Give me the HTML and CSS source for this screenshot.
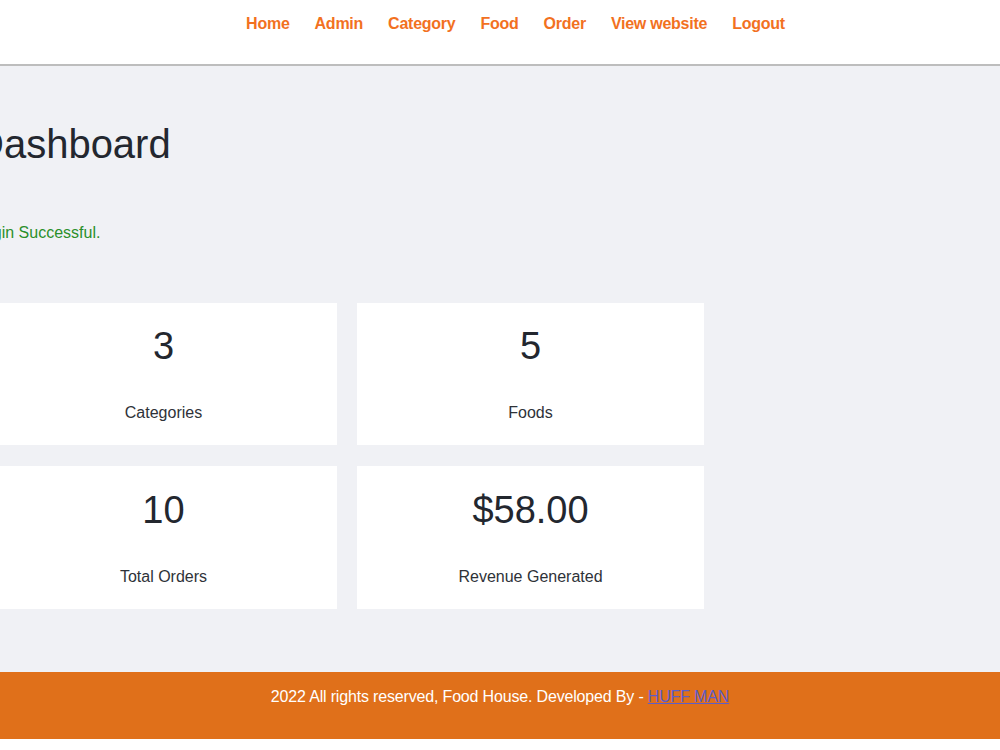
FILE: index.html
```html
<!DOCTYPE html>
<html lang="en">
<head>
<meta charset="utf-8">
<title>Food House - Dashboard</title>
<link rel="stylesheet" href="styles.css">
</head>
<body>
<header class="menu">
  <nav class="nav">
    <a href="#">Home</a>
    <a href="#">Admin</a>
    <a href="#">Category</a>
    <a href="#">Food</a>
    <a href="#">Order</a>
    <a href="#">View website</a>
    <a href="#">Logout</a>
  </nav>
</header>
<main class="main-content">
  <div class="wrapper">
    <h1 class="title">Dashboard</h1>
    <div class="success">Login Successful.</div>
    <div class="cards">
      <div class="card"><div class="num">3</div><div class="label">Categories</div></div>
      <div class="card"><div class="num">5</div><div class="label">Foods</div></div>
      <div class="card"><div class="num">10</div><div class="label">Total Orders</div></div>
      <div class="card"><div class="num">$58.00</div><div class="label">Revenue Generated</div></div>
    </div>
  </div>
</main>
<footer class="footer">
  <p>2022 All rights reserved, Food House. Developed By - <a href="#">HUFF MAN</a></p>
</footer>
</body>
</html>
```

FILE: styles.css
```css
html, body {
  margin: 0;
  padding: 0;
}
body {
  background: #ffffff;
  font-family: "Liberation Sans", Arial, sans-serif;
  font-size: 16px;
  color: #23272f;
  overflow-x: hidden;
}
.menu {
  height: 64px;
  background: #ffffff;
  border-bottom: 2px solid #bdbdbd;
}
.nav {
  display: flex;
  justify-content: center;
  gap: 25px;
  padding: 15px 0 0 31px;
}
.nav a {
  color: #f2711f;
  font-weight: bold;
  font-size: 16px;
  letter-spacing: -0.25px;
  text-decoration: none;
  line-height: 18px;
}
.main-content {
  background: #f0f1f5;
  padding: 55px 0 63px;
}
.wrapper {
  margin-left: -25px;
}
.title {
  margin: 0;
  font-size: 40px;
  font-weight: normal;
  line-height: 46px;
  color: #23272f;
}
.success {
  margin-top: 57px;
  color: #2a8f2a;
  line-height: 18px;
}
.cards {
  margin-top: 61px;
  padding-left: 15px;
  display: grid;
  grid-template-columns: 347px 347px;
  column-gap: 20px;
  row-gap: 21px;
}
.card {
  background: #ffffff;
  height: 142px;
  box-sizing: border-box;
  padding-top: 21px;
  text-align: center;
}
.card:nth-child(n+3) {
  height: 143px;
  padding-top: 22px;
}
.num {
  font-size: 38px;
  line-height: 44px;
  color: #23272f;
}
.label {
  margin-top: 36px;
  line-height: 18px;
  color: #2e3238;
}
.footer {
  background: #e0701a;
  padding: 16px 0 33px;
  text-align: center;
}
.footer p {
  margin: 0;
  color: #ffffff;
  line-height: 18px;
  letter-spacing: -0.17px;
}
.footer a {
  color: #5d5dc8;
  text-decoration: underline;
}
```
